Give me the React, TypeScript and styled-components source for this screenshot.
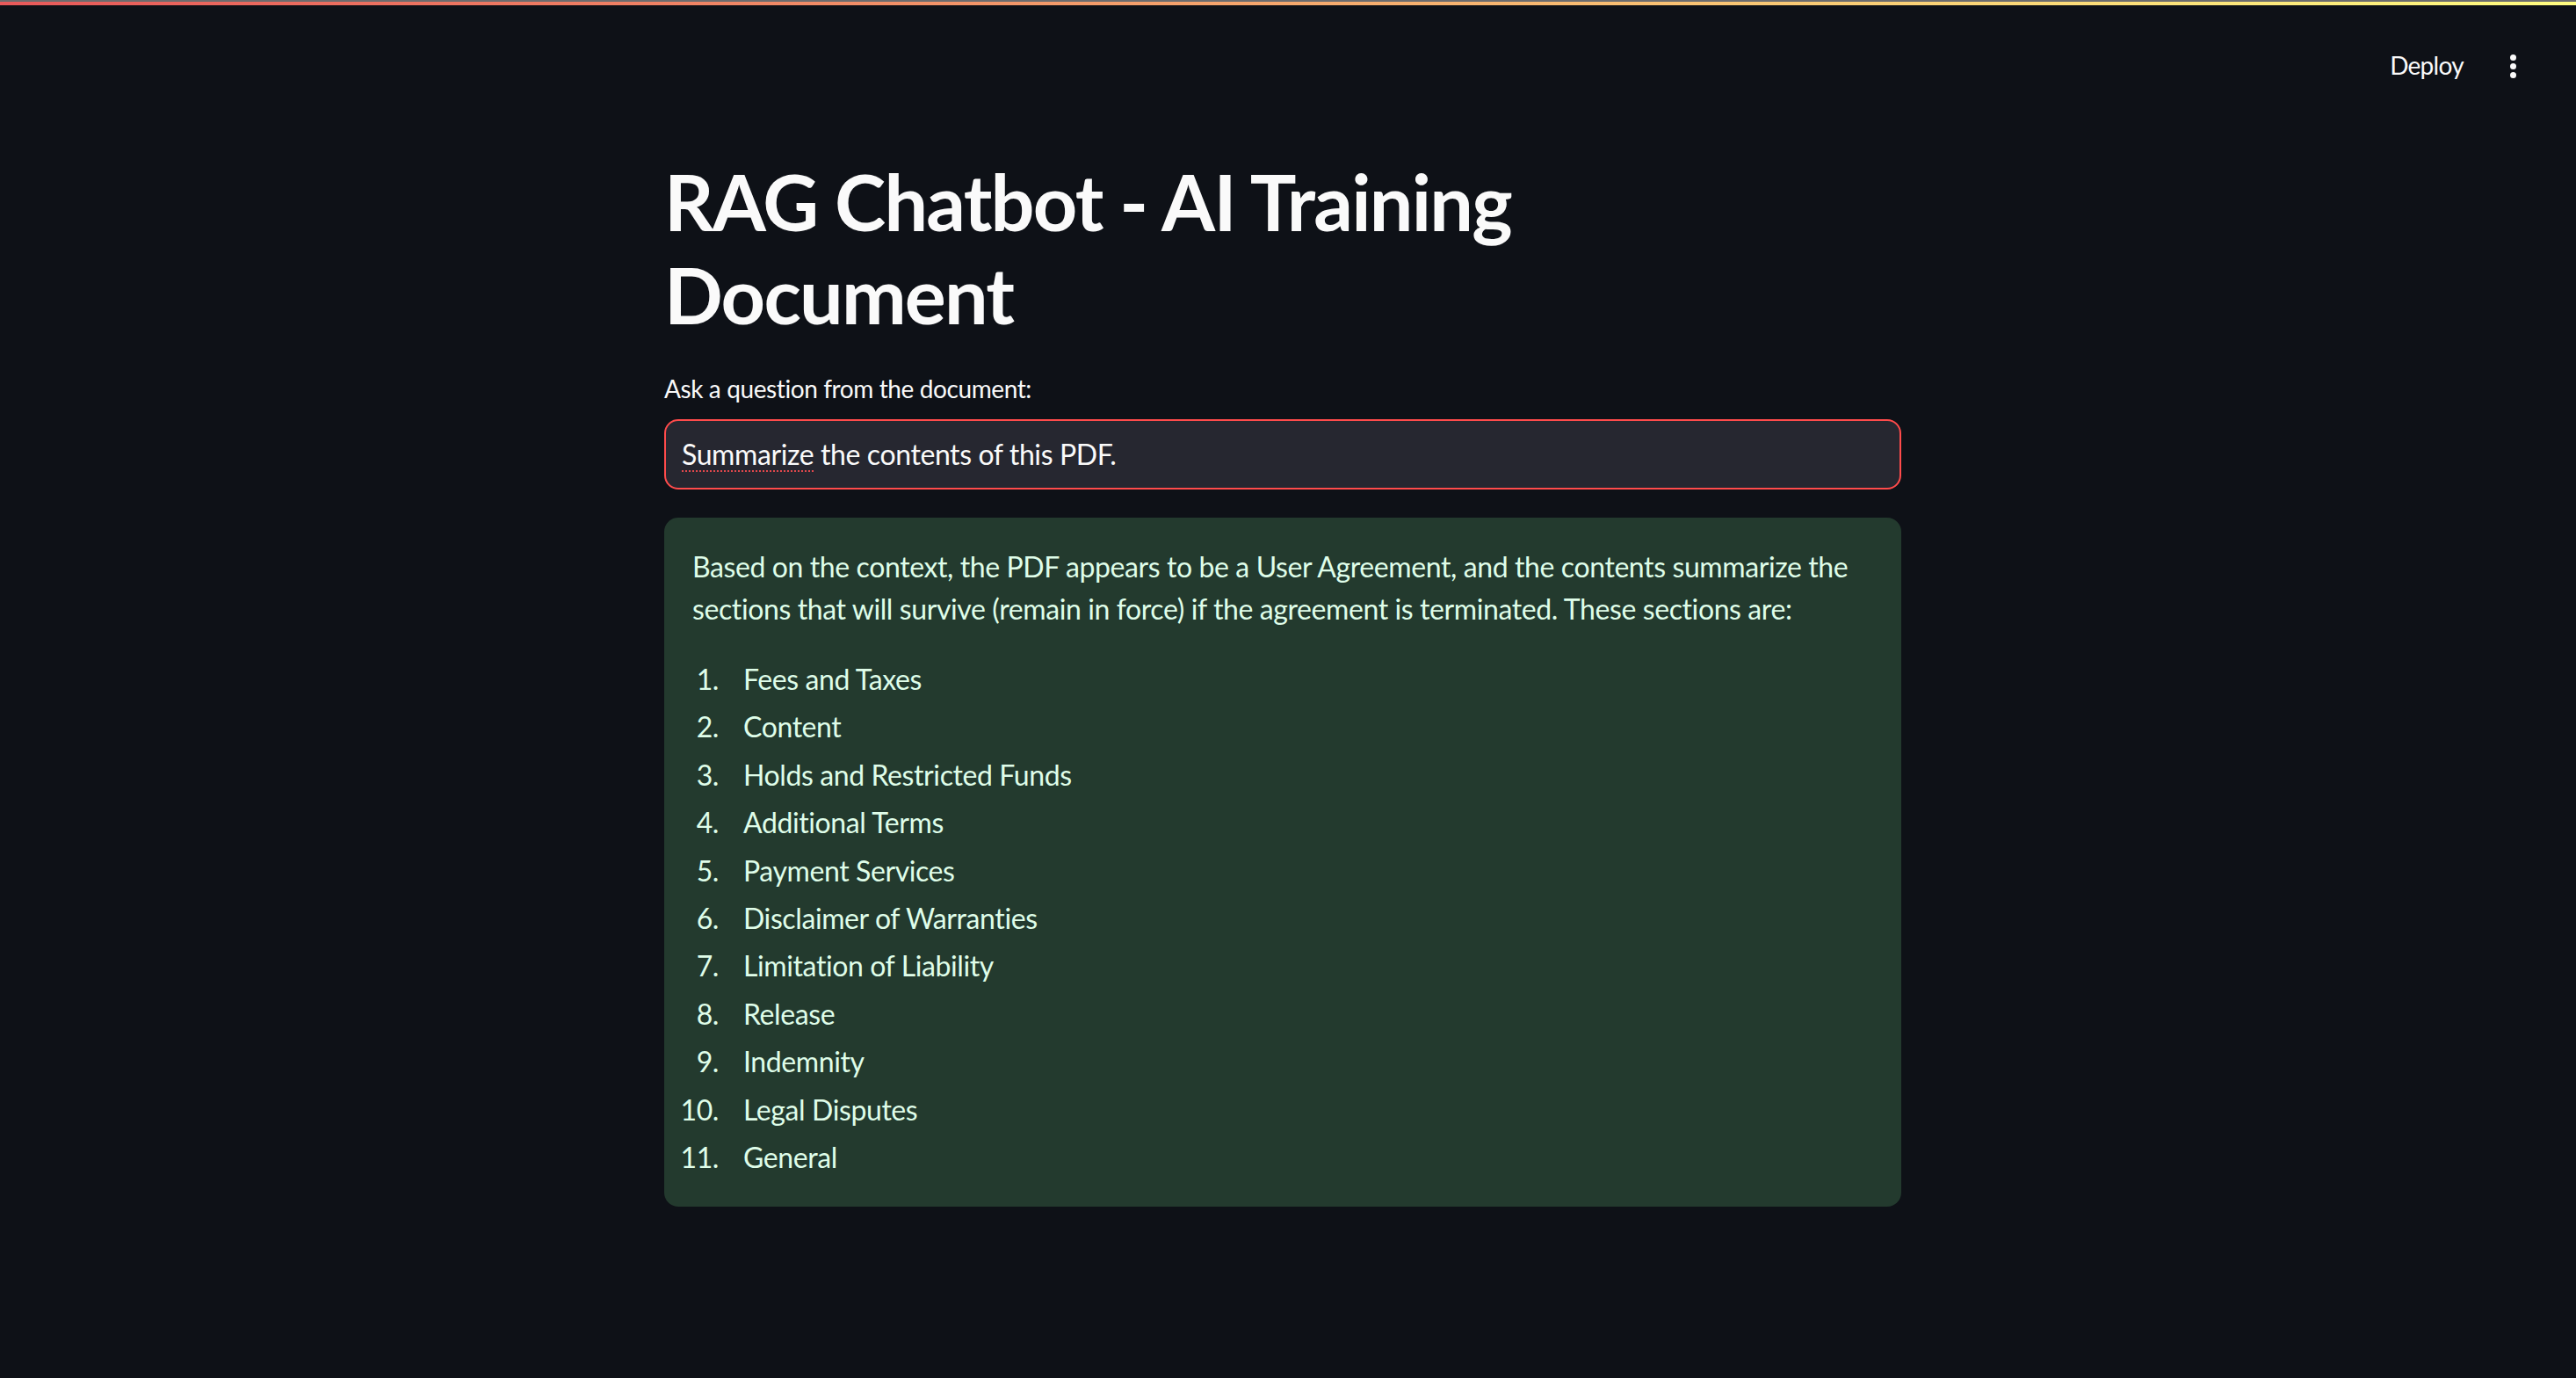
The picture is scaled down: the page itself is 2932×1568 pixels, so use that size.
import React from "react";
import styled, { createGlobalStyle } from "styled-components";

const GlobalStyle = createGlobalStyle`
  html, body {
    margin: 0;
    padding: 0;
    background: #0e1117;
  }
  body {
    font-family: Lato, "Noto Sans", sans-serif;
    color: #fafafa;
    letter-spacing: -0.025em;
  }
`;

const Page = styled.div`
  min-height: 100vh;
  background: #0e1117;
  display: flex;
  flex-direction: column;
`;

const Decoration = styled.div`
  height: 4px;
  border-top: 2px solid #6c6c6e;
  background: linear-gradient(90deg, #e8595a 0%, #f6a86d 50%, #fffd80 100%);
`;

const Header = styled.header`
  height: 114px;
  display: flex;
  align-items: flex-start;
  justify-content: flex-end;
  padding: 0 68px 0 0;
  box-sizing: border-box;
`;

const HeaderActions = styled.div`
  display: flex;
  align-items: flex-start;
  gap: 53px;
  margin-top: 52px;
`;

const DeployButton = styled.button`
  background: transparent;
  border: none;
  color: #fafafa;
  font-family: Lato, "Noto Sans", sans-serif;
  font-size: 28px;
  line-height: 1.2;
  letter-spacing: -0.025em;
  padding: 0;
  cursor: pointer;
`;

const Kebab = styled.div`
  display: flex;
  flex-direction: column;
  gap: 3px;
  margin-top: 4px;
`;

const Dot = styled.span`
  width: 7px;
  height: 7px;
  border-radius: 50%;
  background: #fafafa;
`;

const Body = styled.div`
  padding-right: 12px;
`;

const Main = styled.main`
  width: 1408px;
  margin: 0 auto;
  padding-top: 57px;
  display: flex;
  flex-direction: column;
`;

const Title = styled.h1`
  margin: 0;
  font-size: 88px;
  line-height: 1.2;
  font-weight: 700;
  letter-spacing: -0.02em;
  color: #fafafa;
  width: 1100px;
`;

const Label = styled.label`
  margin-top: 32px;
  font-size: 28px;
  line-height: 1.6;
  color: #fafafa;
`;

const InputBox = styled.div`
  margin-top: 12px;
  height: 80px;
  box-sizing: border-box;
  border: 2px solid #ff4b4b;
  border-radius: 16px;
  background: #262730;
  display: flex;
  align-items: center;
  padding: 0 18px;
  font-size: 32px;
  color: #fafafa;
`;

const Misspelled = styled.span`
  text-decoration: underline dotted #e0474c;
  text-decoration-thickness: 2px;
  text-underline-offset: 6px;
`;

const Card = styled.section`
  margin-top: 32px;
  background: #233a2e;
  border-radius: 16px;
  padding: 32px 32px 32px;
  color: #dffde9;
  font-size: 32px;
  line-height: 48px;
`;

const Paragraph = styled.p`
  margin: 0 0 32px;
`;

const List = styled.ol`
  margin: 0;
  padding: 0;
  list-style: none;
  display: flex;
  flex-direction: column;
  gap: 6.4px;
`;

const Item = styled.li`
  display: flex;
`;

const Num = styled.span`
  width: 30px;
  flex-shrink: 0;
  margin-right: 28px;
  white-space: nowrap;
  display: flex;
  justify-content: flex-end;
`;

const items = [
  "Fees and Taxes",
  "Content",
  "Holds and Restricted Funds",
  "Additional Terms",
  "Payment Services",
  "Disclaimer of Warranties",
  "Limitation of Liability",
  "Release",
  "Indemnity",
  "Legal Disputes",
  "General",
];

export default function App() {
  return (
    <Page>
      <GlobalStyle />
      <Decoration />
      <Header>
        <HeaderActions>
          <DeployButton>Deploy</DeployButton>
          <Kebab>
            <Dot />
            <Dot />
            <Dot />
          </Kebab>
        </HeaderActions>
      </Header>
      <Body>
        <Main>
          <Title>RAG Chatbot - AI Training Document</Title>
          <Label>Ask a question from the document:</Label>
          <InputBox>
            <span>
              <Misspelled>Summarize</Misspelled> the contents of this PDF.
            </span>
          </InputBox>
          <Card>
            <Paragraph>
              Based on the context, the PDF appears to be a User Agreement, and the contents summarize the
              sections that will survive (remain in force) if the agreement is terminated. These sections are:
            </Paragraph>
            <List>
              {items.map((t, i) => (
                <Item key={t}>
                  <Num>{i + 1}.</Num>
                  <span>{t}</span>
                </Item>
              ))}
            </List>
          </Card>
        </Main>
      </Body>
    </Page>
  );
}
